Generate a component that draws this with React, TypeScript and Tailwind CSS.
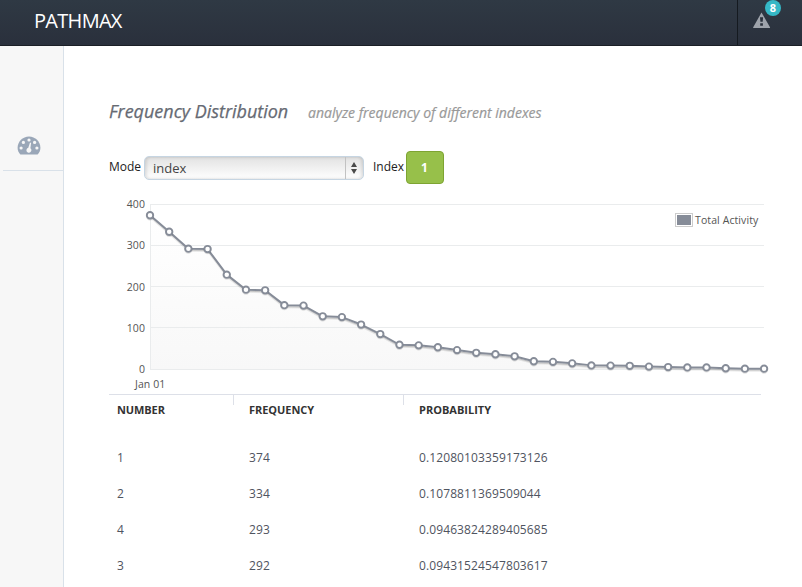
const values = [
  374, 334, 293, 292, 230, 193.5, 192, 156, 155, 129, 127, 109, 86, 60, 58.5, 54,
  47, 40.5, 37, 32, 20, 18.5, 15, 10, 9.5, 9, 7, 6, 5, 5, 3, 2, 2,
];

const rows = [
  ["1", "374", "0.12080103359173126"],
  ["2", "334", "0.1078811369509044"],
  ["4", "293", "0.09463824289405685"],
  ["3", "292", "0.09431524547803617"],
];

const points = values.map((v, i) => ({ x: 41 + i * 19.19, y: 174.5 - v * 0.4125 }));
const line = points.map((p) => `${p.x},${p.y}`).join(" ");

function Gauge() {
  return (
    <svg width="24" height="19" viewBox="0 0 24 19">
      <path
        d="M3.4 18.6C1.6 16.5.6 14.3.6 11.7.6 5.4 5.7.4 12 .4s11.4 5 11.4 11.3c0 2.6-1 4.8-2.8 6.9z"
        fill="#9aa7b8"
      />
      <g fill="#f7f7f7">
        <circle cx="4.1" cy="12" r="1.6" />
        <circle cx="6.4" cy="6.4" r="1.6" />
        <circle cx="12" cy="4" r="1.6" />
        <circle cx="17.6" cy="6.4" r="1.6" />
        <circle cx="19.9" cy="12" r="1.6" />
        <path d="M13 6.6l1.1.3-.7 5.3a2.5 2.5 0 1 1-2.1-.4z" />
      </g>
    </svg>
  );
}

function Chart() {
  return (
    <svg className="block" width="670" height="199" viewBox="0 0 670 199">
      <defs>
        <linearGradient id="area" x1="0" y1="0" x2="0" y2="1">
          <stop offset="0" stopColor="#ffffff" />
          <stop offset="1" stopColor="#f8f8f8" />
        </linearGradient>
      </defs>
      <polygon points={`41,174.5 ${line} 655,174.5`} fill="url(#area)" />
      <g fill="#eaeced">
        {[9, 50, 91, 132, 174].map((y) => (
          <rect key={y} x="41" y={y} width="614" height="1" />
        ))}
        <rect x="41" y="9" width="1" height="166" />
      </g>
      <g fill="none" strokeLinejoin="round">
        <polyline points={line} stroke="#000" strokeOpacity=".09" strokeWidth="2" transform="translate(0.3 2)" />
        <polyline points={line} stroke="#000" strokeOpacity=".14" strokeWidth="1" transform="translate(0.3 1.5)" />
        <polyline points={line} stroke="#868c98" strokeWidth="2" />
      </g>
      {points.map((p) => (
        <g key={p.x}>
          <circle cx={p.x} cy={p.y + 1} r="3.4" fill="none" stroke="#000" strokeOpacity=".12" strokeWidth="1.5" />
          <circle cx={p.x} cy={p.y} r="3.2" fill="#fff" stroke="#868c98" strokeWidth="1.9" />
        </g>
      ))}
      <g fill="#545454" fontSize="10.5" letterSpacing=".1">
        <text x="36" y="13" textAnchor="end">400</text>
        <text x="36" y="54" textAnchor="end">300</text>
        <text x="36" y="96" textAnchor="end">200</text>
        <text x="36" y="137" textAnchor="end">100</text>
        <text x="36" y="178" textAnchor="end">0</text>
        <text x="26" y="193">Jan 01</text>
        <text x="586" y="29">Total Activity</text>
      </g>
      <rect x="566.5" y="18.5" width="17" height="13" fill="#fff" stroke="#ccc" />
      <rect x="568" y="20" width="14" height="10" fill="#868c98" />
    </svg>
  );
}

export default function App() {
  return (
    <div className="flex h-[587px] w-[802px] flex-col overflow-hidden bg-white font-['Open_Sans',sans-serif] text-[#222]">
      <header className="flex h-[46px] shrink-0 justify-between border-b border-[#1b1f26] bg-linear-to-b from-[#2f3944] to-[#2a303c]">
        <div className="pt-[7px] pl-[34px] text-[20px] leading-[27px] tracking-[-0.7px] text-white">PATHMAX</div>
        <div className="relative w-[65px] border-l border-[#151a20]">
          <svg className="mt-3 ml-[15px]" width="18" height="17" viewBox="0 0 18 17">
            <path d="M8.5.5 17 15.2a.5.5 0 0 1-.4.8H.6a.5.5 0 0 1-.4-.8z" fill="#9ea3ab" />
            <path d="M7 5.2h3.1l-.4 4.6H7.4zM7.2 11.2h2.7v2.5H7.2z" fill="#2b323d" />
          </svg>
          <span className="absolute top-0 left-[27px] flex size-4 items-center justify-center rounded-full bg-[#35b8c6] text-[11px] leading-4 font-bold text-white">
            8
          </span>
        </div>
      </header>
      <div className="flex min-h-0 flex-1">
        <aside className="w-16 shrink-0 border-r border-[#d9e1e9] bg-[#f7f7f7]">
          <div className="ml-[3px] flex h-[125px] items-end border-b border-[#d9e1e9] pb-[15px] pl-[14px]">
            <Gauge />
          </div>
        </aside>
        <main className="flex-1 pl-[45px]">
          <div className="flex h-[105px] items-baseline pt-[52px] italic">
            <h1 className="w-[199px] text-[18px] leading-[27px] tracking-[-0.02px] whitespace-nowrap text-[#666a73] [-webkit-text-stroke:0.25px_#666a73]">
              Frequency Distribution
            </h1>
            <p className="text-[14px] whitespace-nowrap text-[#999] [-webkit-text-stroke:0.2px_#999]">
              analyze frequency of different indexes
            </p>
          </div>
          <div className="flex h-[44px] items-start text-[12px] leading-5">
            <span className="mt-[6px] w-[35px]">Mode</span>
            <div className="mt-[5px] flex h-6 w-[220px] items-stretch rounded-[5px] border border-[#c6d5e2] bg-linear-to-b from-[#e2e2e2] to-white shadow-[inset_2px_0_3px_rgba(0,0,0,0.1),inset_-2px_0_3px_rgba(0,0,0,0.1)]">
              <span className="flex-1 pl-2 text-[13px] leading-[23px] text-[#444]">index</span>
              <span className="flex w-[18px] items-center justify-center border-l border-[#c2c2c2] pr-px">
                <svg width="8" height="12" viewBox="0 0 8 12" fill="#4a4a4a">
                  <path d="M4 0l3 5H1zM4 12l3-5H1z" />
                </svg>
              </span>
            </div>
            <span className="mt-[6px] ml-[9px] w-[33px]">Index</span>
            <button className="flex h-[33px] w-[38px] items-center justify-center rounded-[4px] border border-[#7ea432] bg-[#97c04a] pr-px text-[12px] font-bold text-white">
              1
            </button>
          </div>
          <Chart />
          <div className="w-[652px] border-t border-[#dde0e8]">
            <div className="flex h-[45px] text-[11px] leading-[30px] font-bold text-[#333]">
              <span className="w-[124px] pl-2 tracking-[-0.1px]">NUMBER</span>
              <span className="h-[10px] w-[170px] border-l border-[#dde0e8] pl-[15px] tracking-[-0.05px]">FREQUENCY</span>
              <span className="h-[10px] border-l border-[#dde0e8] pl-[15px]">PROBABILITY</span>
            </div>
            {rows.map(([n, f, p]) => (
              <div key={n} className="flex h-9 text-[12px] leading-9 tracking-[0.11px] text-[#4f5460]">
                <span className="w-[140px] pl-2">{n}</span>
                <span className="w-[170px]">{f}</span>
                <span>{p}</span>
              </div>
            ))}
          </div>
        </main>
      </div>
    </div>
  );
}
